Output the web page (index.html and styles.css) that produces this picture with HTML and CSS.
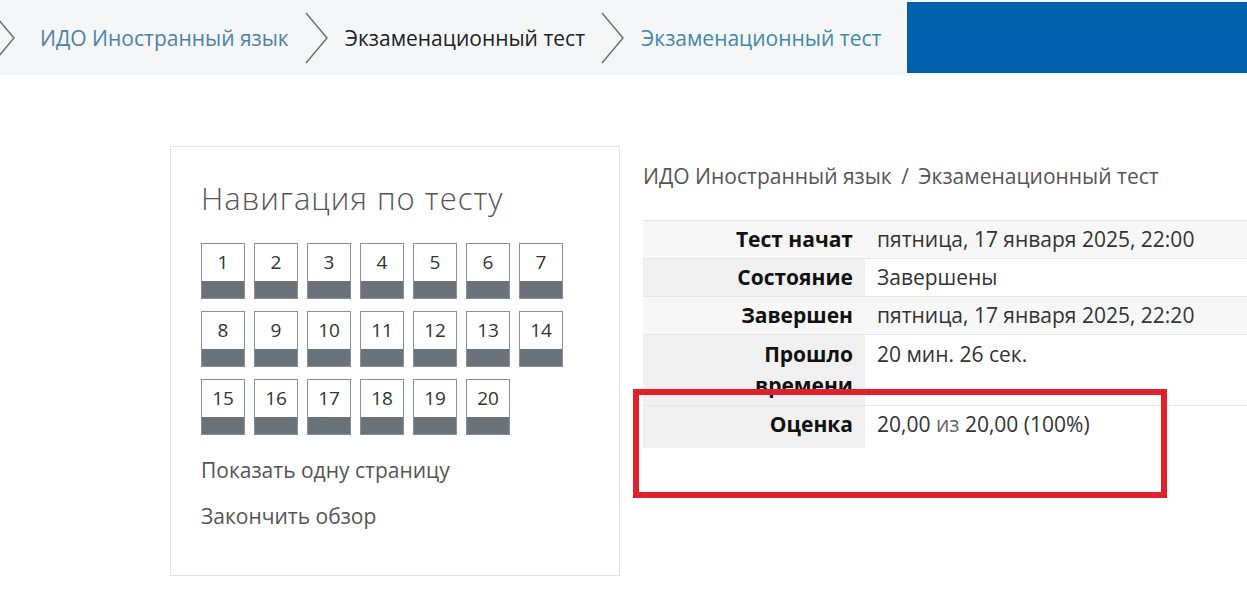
FILE: index.html
```html
<!DOCTYPE html>
<html lang="ru">
<head>
    <meta charset="UTF-8">
    <meta name="viewport" content="width=device-width, initial-scale=1.0">
    <title>Экзаменационный тест</title>
    <link rel="stylesheet" href="styles.css">
</head>
<body>
    <!-- top breadcrumb bar -->
    <div class="topbar">
        <ol class="crumbs">
            <li class="first">
                <svg class="chev" viewBox="0 0 23 52"><polyline points="1,1 22,26 1,51"/></svg>
                <a href="#" class="crumb-link">ИДО Иностранный язык</a>
            </li>
            <li>
                <svg class="chev" viewBox="0 0 23 52"><polyline points="1,1 22,26 1,51"/></svg>
                <span class="crumb-current">Экзаменационный тест</span>
            </li>
            <li>
                <svg class="chev" viewBox="0 0 23 52"><polyline points="1,1 22,26 1,51"/></svg>
                <a href="#" class="crumb-link teal">Экзаменационный тест</a>
            </li>
        </ol>
        <div class="blue-box"></div>
    </div>

    <div class="page">
        <!-- quiz navigation block -->
        <div class="nav-block">
            <h2 class="nav-title">Навигация по тесту</h2>
            <div class="qn-grid">
                <a href="#" class="qn"><span>1</span></a>
                <a href="#" class="qn"><span>2</span></a>
                <a href="#" class="qn"><span>3</span></a>
                <a href="#" class="qn"><span>4</span></a>
                <a href="#" class="qn"><span>5</span></a>
                <a href="#" class="qn"><span>6</span></a>
                <a href="#" class="qn"><span>7</span></a>
                <a href="#" class="qn"><span>8</span></a>
                <a href="#" class="qn"><span>9</span></a>
                <a href="#" class="qn"><span>10</span></a>
                <a href="#" class="qn"><span>11</span></a>
                <a href="#" class="qn"><span>12</span></a>
                <a href="#" class="qn"><span>13</span></a>
                <a href="#" class="qn"><span>14</span></a>
                <a href="#" class="qn"><span>15</span></a>
                <a href="#" class="qn"><span>16</span></a>
                <a href="#" class="qn"><span>17</span></a>
                <a href="#" class="qn"><span>18</span></a>
                <a href="#" class="qn"><span>19</span></a>
                <a href="#" class="qn"><span>20</span></a>
            </div>
            <a href="#" class="nav-link">Показать одну страницу</a>
            <a href="#" class="nav-link">Закончить обзор</a>
        </div>

        <!-- attempt summary -->
        <div class="main">
            <div class="path">ИДО Иностранный язык <span class="sep">/</span> Экзаменационный тест</div>
            <div class="summary-wrap">
                <table class="summary">
                    <tr class="odd">
                        <th>Тест начат</th>
                        <td>пятница, 17 января 2025, 22:00</td>
                    </tr>
                    <tr>
                        <th>Состояние</th>
                        <td>Завершены</td>
                    </tr>
                    <tr class="odd">
                        <th>Завершен</th>
                        <td>пятница, 17 января 2025, 22:20</td>
                    </tr>
                    <tr class="tall">
                        <th>Прошло времени</th>
                        <td>20 мин. 26 сек.</td>
                    </tr>
                    <tr>
                        <th>Оценка</th>
                        <td>20,00 <span class="light">из</span> 20,00 (100%)</td>
                    </tr>
                </table>
                <!-- red highlight drawn over the grade row -->
                <div class="highlight"></div>
            </div>
        </div>
    </div>
</body>
</html>
```

FILE: styles.css
```css
* {
    margin: 0;
    padding: 0;
    box-sizing: border-box;
}
body {
    font-family: "Open Sans", "Noto Sans", sans-serif;
    color: #333;
    background: #fff;
    overflow: hidden;
}
a {
    text-decoration: none;
}
.topbar {
    display: flex;
    height: 75px;
    background-color: #f4f6f8;
}
.crumbs {
    list-style: none;
    display: flex;
    align-items: center;
    margin-left: -8px;
    width: 915px;
}
.crumbs li {
    display: flex;
    align-items: center;
    font-size: 21px;
    margin-right: 16px;
}
.chev {
    width: 23px;
    height: 52px;
    margin-right: 17px;
}
.crumbs li.first .chev {
    margin-right: 25px;
}
.chev polyline {
    fill: none;
    stroke: #6b6b6b;
    stroke-width: 1.4;
}
.crumb-link {
    color: #4f82a6;
}
.crumb-link.teal {
    color: #3f8aa6;
}
.crumb-current {
    color: #222;
}
.blue-box {
    flex: 1;
    margin: 2px 0;
    background-color: #0062ae;
}
.page {
    display: flex;
    align-items: flex-start;
    padding-left: 170px;
    padding-top: 71px;
}
.nav-block {
    width: 450px;
    height: 430px;
    border: 1px solid #e3e3e3;
    padding: 27px 30px;
    display: flex;
    flex-direction: column;
    align-items: flex-start;
}
.nav-title {
    font-size: 31px;
    font-weight: 300;
    letter-spacing: 1px;
    color: #555;
    line-height: 48px;
    margin-bottom: 21px;
}
.qn-grid {
    display: grid;
    grid-template-columns: repeat(7, 44px);
    column-gap: 9px;
    row-gap: 12px;
    margin-bottom: 21px;
}
.qn {
    display: flex;
    flex-direction: column;
    height: 56px;
    border: 1px solid #8a8f94;
    background-color: #6b737a;
    color: #333;
}
.qn span {
    display: block;
    height: 37px;
    line-height: 37px;
    text-align: center;
    font-size: 19px;
    background-color: #fff;
}
.nav-link {
    color: #555;
    font-size: 21px;
    line-height: 28px;
    margin-bottom: 18px;
}
.main {
    flex: 1;
    margin-left: 23px;
    padding-top: 16px;
}
.path {
    font-size: 21px;
    color: #555;
    line-height: 28px;
    margin-bottom: 30px;
}
.sep {
    margin: 0 4px;
}
.summary-wrap {
    position: relative;
}
.summary {
    width: 100%;
    table-layout: fixed;
    border-collapse: collapse;
    font-size: 21px;
}
.summary th,
.summary td {
    border-top: 1px solid #e6e6e6;
    padding: 4px 12px;
    vertical-align: top;
    line-height: 29px;
    text-align: left;
}
.summary th {
    width: 222px;
    padding-left: 60px;
    text-align: right;
    font-weight: 700;
    color: #111;
    background-color: #f0f0f0;
}
.summary td {
    color: #333;
}
.summary tr.odd th,
.summary tr.odd td {
    background-color: #f7f7f7;
}
.summary tr.tall th,
.summary tr.tall td {
    line-height: 31px;
}
.summary tr:last-child td,
.summary tr:last-child th {
    height: 42px;
}
.light {
    color: #666;
}
.highlight {
    position: absolute;
    left: -10px;
    top: 169px;
    width: 534px;
    height: 109px;
    border: 6px solid #e0212b;
}
```
